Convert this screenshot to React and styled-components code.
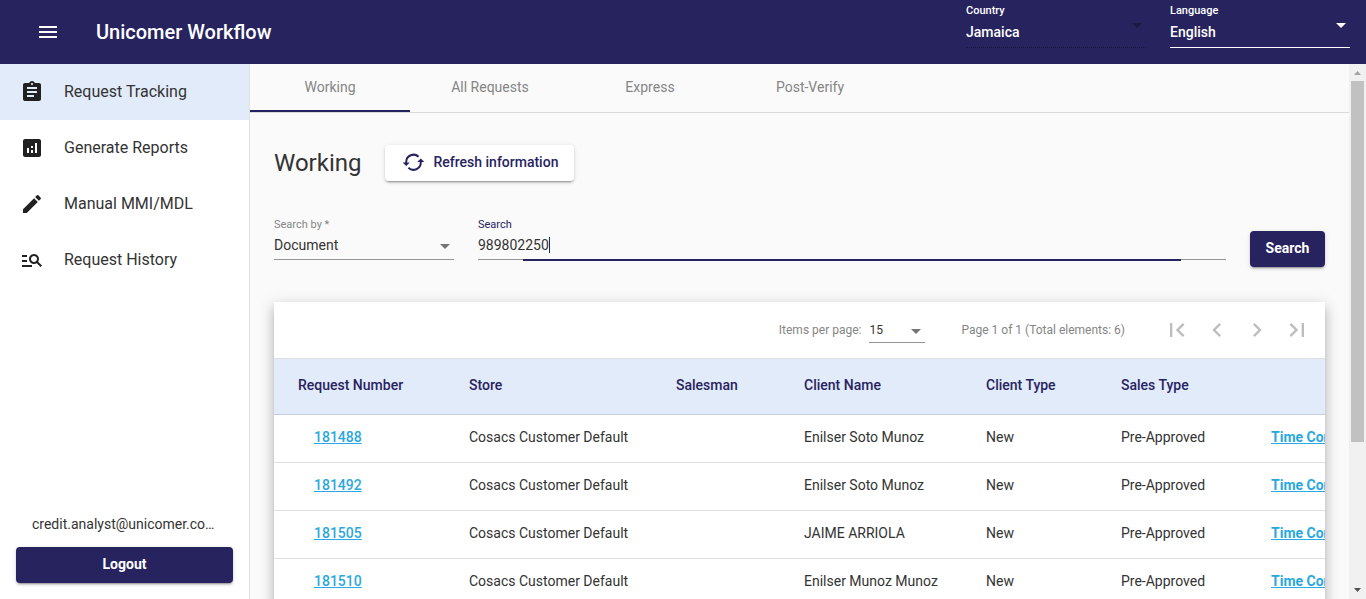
import React from "react";
import styled, { createGlobalStyle } from "styled-components";
import {
  MdMenu, MdAssignment, MdAnalytics, MdEdit, MdManageSearch,
  MdFirstPage, MdChevronLeft, MdChevronRight, MdLastPage,
} from "react-icons/md";

const navy = "#27235f";
const pale = "#e2ebfa";
const line = "#e0e0e0";
const ink = "#333";
const muted = "#858585";

const GlobalStyle = createGlobalStyle`
  * { box-sizing: border-box; }
  body { margin: 0; background: #fafafa; color: ${ink}; font: 400 14px/20px Roboto, sans-serif; }
  button, input, select { font: inherit; color: inherit; }
`;

const Shell = styled.div`
  display: flex;
  flex-direction: column;
  height: 100vh;
`;

const Header = styled.header`
  display: flex;
  align-items: center;
  flex: none;
  min-height: 64px;
  padding: 0 16px 0 36px;
  background: ${navy};
  color: #fff;
`;

const IconButton = styled.button`
  display: flex;
  align-items: center;
  justify-content: center;
  width: ${(p) => p.$size}px;
  height: ${(p) => p.$size}px;
  padding: 0;
  border: 0;
  background: none;
  color: ${(p) => p.$tone || "inherit"};
`;

const Brand = styled.h1`
  flex: 1;
  margin: 0 0 0 36px;
  font-size: 20px;
  line-height: 32px;
  font-weight: 500;
`;

const HeaderFields = styled.div`
  display: flex;
  gap: 24px;
  padding-bottom: 13px;
`;

const HeaderField = styled.label`
  display: flex;
  flex-direction: column;
  position: relative;
  width: 180px;
  padding-bottom: 2px;
  font-size: 11px;
  line-height: 16px;
  font-weight: 500;
  border-bottom: 1px ${(p) => (p.$disabled ? "dotted #17153c" : "solid #fff")};
`;

const Select = styled.select`
  appearance: none;
  width: 100%;
  height: ${(p) => p.$height || 24}px;
  padding: 0 24px 0 0;
  border: 0;
  outline: 0;
  background: none;
  font-size: ${(p) => p.$size || 14}px;
  line-height: 20px;
  opacity: 1;
`;

const Arrow = styled.svg`
  position: absolute;
  right: 4px;
  bottom: ${(p) => p.$bottom}px;
  width: 10px;
  height: 5px;
  fill: ${(p) => p.$tone};
  pointer-events: none;
`;

const Body = styled.div`
  display: flex;
  flex: 1;
  min-height: 0;
`;

const Sidebar = styled.aside`
  display: flex;
  flex-direction: column;
  flex: none;
  width: 250px;
  border-right: 1px solid ${line};
  background: #fff;
`;

const NavLink = styled.a`
  display: flex;
  align-items: center;
  gap: 20px;
  height: 56px;
  padding: 0 20px;
  background: ${(p) => (p.$active ? pale : "transparent")};
  color: ${ink};
  font-size: 16px;
  text-decoration: none;
  svg { color: #212121; }
`;

const Account = styled.div`
  margin-top: auto;
  padding: 16px;
`;

const Email = styled.div`
  padding: 0 16px;
  margin-bottom: 13px;
  overflow: hidden;
  text-overflow: ellipsis;
  white-space: nowrap;
`;

const Button = styled.button`
  display: flex;
  align-items: center;
  justify-content: center;
  gap: 8px;
  flex: none;
  width: ${(p) => (p.$block ? "100%" : "auto")};
  min-width: 75px;
  height: 36px;
  padding: 0 ${(p) => (p.$light ? 16 : 15)}px 2px;
  border: 0;
  border-radius: 4px;
  background: ${(p) => (p.$light ? "#fff" : navy)};
  color: ${(p) => (p.$light ? navy : "#fff")};
  font-weight: ${(p) => (p.$light ? 500 : 700)};
  box-shadow: 0 3px 1px -2px rgba(0, 0, 0, 0.2), 0 2px 2px rgba(0, 0, 0, 0.14), 0 1px 5px rgba(0, 0, 0, 0.12);
`;

const Main = styled.main`
  flex: 1;
  min-width: 0;
  overflow-y: auto;
  scrollbar-width: none;
`;

const Tabs = styled.nav`
  display: flex;
  border-bottom: 1px solid #dadada;
`;

const Tab = styled.button`
  width: 160px;
  height: 48px;
  padding: 0;
  border: 0;
  border-bottom: 2px solid ${(p) => (p.$active ? navy : "transparent")};
  background: none;
  color: ${muted};
`;

const Content = styled.div`
  padding: 32px 24px 24px;
`;

const TitleRow = styled.div`
  display: flex;
  align-items: center;
  gap: 24px;
`;

const Title = styled.h2`
  margin: 0;
  font-size: 24px;
  line-height: 32px;
  font-weight: 400;
`;

const SearchForm = styled.form`
  display: flex;
  gap: 24px;
  align-items: flex-start;
  margin: 36px 0 35px;
`;

const Field = styled.label`
  display: flex;
  flex-direction: column;
  position: relative;
  flex: ${(p) => (p.$grow ? "1" : "0 0 180px")};
  min-width: 0;
  height: 43px;
  border-bottom: 1px solid #949494;
  color: ${(p) => (p.$grow ? navy : muted)};
  font-size: 11px;
  line-height: 16px;
  &::after {
    content: "";
    display: ${(p) => (p.$grow ? "block" : "none")};
    position: absolute;
    left: 6%;
    right: 6%;
    bottom: -2px;
    height: 2px;
    background: ${navy};
  }
`;

const FieldValue = styled.span`
  display: flex;
  align-items: center;
  height: 24px;
  color: ${ink};
`;

const TextInput = styled.input`
  field-sizing: content;
  padding: 0;
  border: 0;
  outline: 0;
  background: none;
  font-size: 14px;
  caret-color: transparent;
`;

const Caret = styled.span`
  width: 1px;
  height: 16px;
  background: ${navy};
`;

const SearchAction = styled.div`
  padding-top: 14px;
`;

const Card = styled.section`
  background: #fff;
  box-shadow: 0 5px 5px -3px rgba(0, 0, 0, 0.2), 0 8px 10px 1px rgba(0, 0, 0, 0.14), 0 3px 14px 2px rgba(0, 0, 0, 0.12);
`;

const Paginator = styled.div`
  display: flex;
  align-items: center;
  justify-content: flex-end;
  height: 56px;
  padding-right: 8px;
  color: ${muted};
  font-size: 12px;
`;

const PageSize = styled.label`
  display: flex;
  align-items: center;
  gap: 8px;
`;

const PageSelect = styled.span`
  display: block;
  position: relative;
  width: 56px;
  border-bottom: 1px solid #949494;
  color: ${ink};
`;

const Range = styled.span`
  margin: 0 32px 0 36px;
`;

const TableScroll = styled.div`
  overflow-x: auto;
  scrollbar-width: none;
`;

const Table = styled.table`
  width: 100%;
  min-width: 1160px;
  table-layout: fixed;
  border-collapse: separate;
  border-spacing: 0;
  text-align: left;
`;

const Th = styled.th`
  width: ${(p) => (p.$width ? `${p.$width}px` : "auto")};
  height: 57px;
  padding: 0 0 4px;
  border-top: 1px solid ${line};
  border-bottom: 1px solid #c5cde0;
  background: ${pale};
  color: ${navy};
  font-weight: 500;
  white-space: nowrap;
  &:first-child { padding-left: 24px; }
`;

const Td = styled.td`
  height: 48px;
  padding: 0 0 4px;
  border-bottom: 1px solid ${line};
  white-space: nowrap;
  &:first-child { padding-left: 40px; }
`;

const CellLink = styled.a`
  color: #2ba8df;
  font-weight: ${(p) => (p.$strong ? 700 : 500)};
`;

const ScrollBar = styled.div`
  display: flex;
  flex-direction: column;
  align-items: center;
  flex: none;
  width: 17px;
  background: #f1f1f1;
`;

const ScrollEnd = styled.svg`
  flex: none;
  width: 17px;
  height: 17px;
  fill: ${(p) => p.$tone};
`;

const ScrollTrack = styled.div`
  flex: 1;
  width: 13px;
`;

const ScrollThumb = styled.div`
  height: 72%;
  background: #c1c1c1;
`;

const RefreshGlyph = styled.svg`
  width: 24px;
  height: 24px;
  fill: none;
  stroke: currentColor;
`;

const nav = [
  ["Request Tracking", MdAssignment],
  ["Generate Reports", MdAnalytics],
  ["Manual MMI/MDL", MdEdit],
  ["Request History", MdManageSearch],
];

const columns = [
  ["Request Number", 195], ["Store", 207], ["Salesman", 128], ["Client Name", 182],
  ["Client Type", 135], ["Sales Type", 150], ["", 0],
];

const rows = [
  ["181488", "Enilser Soto Munoz"],
  ["181492", "Enilser Soto Munoz"],
  ["181505", "JAIME ARRIOLA"],
  ["181510", "Enilser Munoz Munoz"],
];

function DropArrow({ tone = "#757575", bottom = 10 }) {
  return (
    <Arrow viewBox="0 0 10 5" $tone={tone} $bottom={bottom} aria-hidden="true">
      <path d="M0 0h10L5 5z" />
    </Arrow>
  );
}

function RefreshIcon() {
  return (
    <RefreshGlyph viewBox="0 0 24 24" aria-hidden="true">
      <path d="M5.200 13V12a7.300 7.300 0 0 1 12.400-5.200M19.800 11.500V12.500a7.300 7.300 0 0 1-12.400 5.200" strokeWidth="2" />
      <path d="M1.600 12.500h7.200l-3.600 3.600zM16.200 12h7.200l-3.600-3.600z" fill="currentColor" stroke="none" />
    </RefreshGlyph>
  );
}

export default function App() {
  return (
    <Shell>
      <GlobalStyle />
      <Header>
        <IconButton $size={24} aria-label="Menu"><MdMenu size={24} /></IconButton>
        <Brand>Unicomer Workflow</Brand>
        <HeaderFields>
          <HeaderField $disabled>
            Country
            <Select $height={26} disabled><option>Jamaica</option></Select>
            <DropArrow tone="#1b1843" bottom={19} />
          </HeaderField>
          <HeaderField>
            Language
            <Select $height={26}><option>English</option></Select>
            <DropArrow tone="#fff" bottom={19} />
          </HeaderField>
        </HeaderFields>
      </Header>
      <Body>
        <Sidebar>
          <nav>
            {nav.map(([label, Icon], i) => (
              <NavLink key={label} href="#" $active={i === 0}><Icon size={24} />{label}</NavLink>
            ))}
          </nav>
          <Account>
            <Email>credit.analyst@unicomer.com</Email>
            <Button $block>Logout</Button>
          </Account>
        </Sidebar>
        <Main>
          <Tabs>
            {["Working", "All Requests", "Express", "Post-Verify"].map((t, i) => (
              <Tab key={t} $active={i === 0}>{t}</Tab>
            ))}
          </Tabs>
          <Content>
            <TitleRow>
              <Title>Working</Title>
              <Button $light><RefreshIcon />Refresh information</Button>
            </TitleRow>
            <SearchForm onSubmit={(e) => e.preventDefault()}>
              <Field>
                Search by *
                <FieldValue><Select><option>Document</option></Select></FieldValue>
                <DropArrow />
              </Field>
              <Field $grow>
                Search
                <FieldValue><TextInput type="text" defaultValue="989802250" /><Caret /></FieldValue>
              </Field>
              <SearchAction><Button>Search</Button></SearchAction>
            </SearchForm>
            <Card>
              <Paginator>
                <PageSize>
                  Items per page:
                  <PageSelect><Select $size={12}><option>15</option></Select><DropArrow bottom={8} /></PageSelect>
                </PageSize>
                <Range>Page 1 of 1 (Total elements: 6)</Range>
                {[["First page", MdFirstPage], ["Previous page", MdChevronLeft], ["Next page", MdChevronRight], ["Last page", MdLastPage]].map(([label, Icon]) => (
                  <IconButton key={label} $size={40} $tone="#bdbdbd" aria-label={label}><Icon size={28} /></IconButton>
                ))}
              </Paginator>
              <TableScroll>
                <Table>
                  <thead>
                    <tr>{columns.map(([label, width]) => <Th key={label} $width={width}>{label}</Th>)}</tr>
                  </thead>
                  <tbody>
                    {rows.map(([id, client]) => (
                      <tr key={id}>
                        <Td><CellLink href="#">{id}</CellLink></Td>
                        <Td>Cosacs Customer Default</Td>
                        <Td />
                        <Td>{client}</Td>
                        <Td>New</Td>
                        <Td>Pre-Approved</Td>
                        <Td><CellLink href="#" $strong>Time Control</CellLink></Td>
                      </tr>
                    ))}
                  </tbody>
                </Table>
              </TableScroll>
            </Card>
          </Content>
        </Main>
        <ScrollBar aria-hidden="true">
          <ScrollEnd viewBox="0 0 17 17" $tone="#a3a3a3"><path d="M5 11h7L8.500 7z" /></ScrollEnd>
          <ScrollTrack><ScrollThumb /></ScrollTrack>
          <ScrollEnd viewBox="0 0 17 17" $tone="#505050"><path d="M5 6h7l-3.500 4z" /></ScrollEnd>
        </ScrollBar>
      </Body>
    </Shell>
  );
}
